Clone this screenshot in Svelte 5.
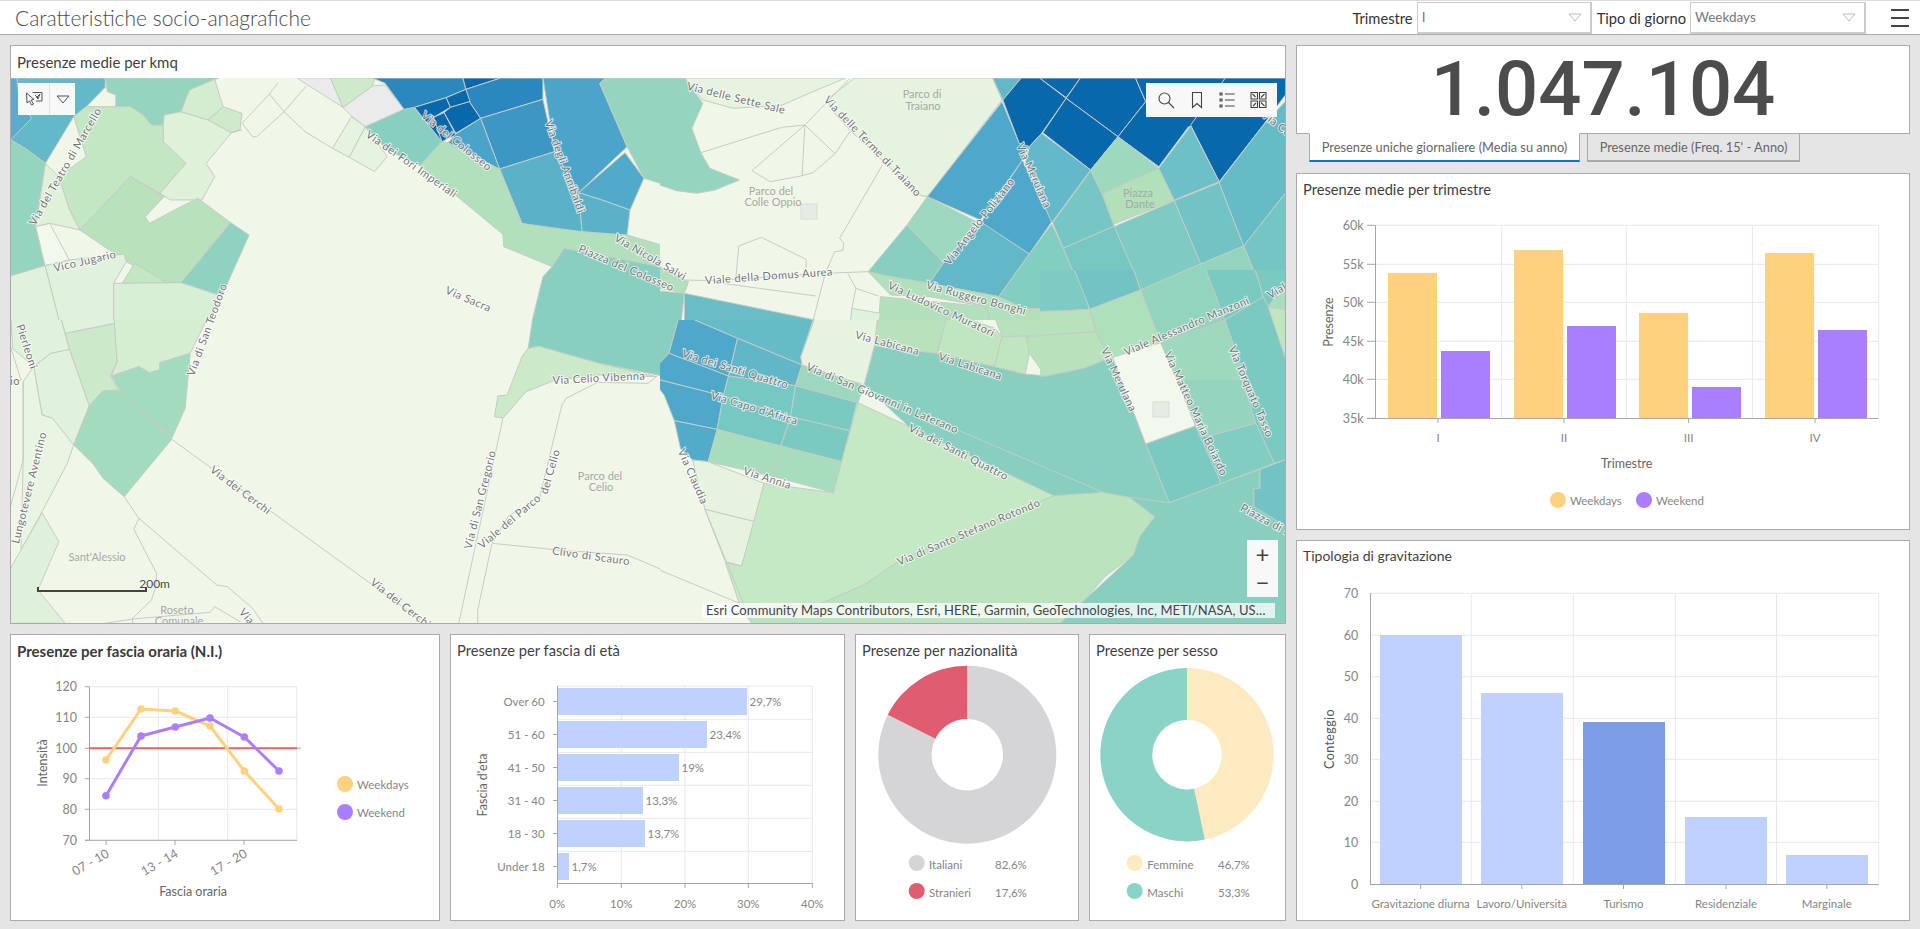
<script>
  // map cells, traced per area: [fill, points]. Each group has its own scale and is clipped to its quadrant.
  const nw = [
    ['#63b9c7', '25,234 250,234 250,262 205,320 175,350 108,490 60,445 25,420'],
    ['#56aecb', '25,234 40,234 45,290 75,355 25,420'],
    ['#95d5bf', '250,234 520,234 450,270 430,335 400,350 385,375 360,375 340,345 310,320 300,325 295,375 265,378 275,320 275,285 255,275'],
    ['#95d5bf', '25,420 60,445 108,490 85,680 107,797 25,828'],
    ['#c2e7c2', '275,320 310,320 340,345 360,375 388,378 388,425 442,490 380,580 310,530 190,690 165,630 140,530 205,470 175,350 205,320'],
    ['#dff1d9', '388,378 390,345 430,335 495,360 550,398 490,490 510,530 480,600 405,600 380,580 442,490 388,425'],
    ['#d4edd0', '430,335 450,270 510,238 530,320 495,360'],
    ['#cfeacb', '495,360 530,320 575,340 570,390 550,398'],
    ['#dff1d9', '108,490 140,530 165,630 190,690 118,670 85,680'],
    ['#b8e2bc', '310,530 390,590 345,650 355,670 430,620 470,595 548,668 430,848 395,848 300,785 190,690'],
    ['#c2e8c2', '320,790 395,848 290,850'],
    ['#8ed3c0', '548,668 592,705 527,888 430,848'],
    ['#f2f8ec', '85,680 118,670 165,780 107,797'],
    ['#e1f2dc', '107,797 165,780 295,762 300,785 270,850 270,985 145,985'],
    ['#e1f2dc', '25,828 107,797 145,985 25,985'],
    ['#d7efd4', '270,850 430,848 527,888 490,985 270,985'],
    ['#ebebeb', '705,234 785,234 815,322 835,348 868,380 960,328 915,255 885,258 815,322'],
    ['#cdebcb', '785,234 890,234 885,258 815,322'],
    ['#e6f4df', '835,350 868,380 830,472 790,445'],
    ['#e6f4df', '868,380 920,470 890,515 830,472'],
    ['#88cfc0', '868,380 960,328 983,322 1050,425 998,497 920,450'],
    ['#2b88be', '885,234 1100,234 1107,268 1060,293 985,322 960,328 915,250'],
    ['#0868ac', '1100,234 1190,234 1107,268'],
    ['#2b88be', '1107,268 1190,234 1290,234 1290,298 1142,355 1115,305'],
    ['#0868ac', '1060,293 1107,268 1117,305 1070,322'],
    ['#0868ac', '1070,322 1115,305 1142,355 1083,400 1055,338'],
    ['#0868ac', '985,322 1060,293 1070,322 1030,352 1050,425'],
    ['#0868ac', '1030,352 1055,338 1083,405 1050,425'],
    ['#3d97c5', '1142,355 1290,298 1318,455 1187,507'],
    ['#4aa3c9', '1065,428 1083,402 1142,355 1187,507 1160,505'],
    ['#4ba4ca', '1290,234 1440,234 1425,250 1490,440 1375,578 1318,455'],
    ['#5bb2c8', '1187,507 1318,455 1375,578 1383,695 1320,690 1265,675 1255,680 1240,670'],
    ['#50aac9', '1375,578 1485,458 1530,535 1497,630 1430,600'],
    ['#5bb2c8', '1375,578 1430,600 1497,630 1490,705 1455,705 1383,695'],
    ['#95d5bf', '1425,250 1440,234 1590,234 1590,558 1530,535 1490,440'],
    ['#b3e0bc', '998,497 1050,425 1065,428 1187,507 1240,670 1265,675 1383,695 1490,705 1590,742 1590,856 1500,790 1340,745 1312,800 1197,740 1195,703'],
    ['#88cfc0', '1340,745 1590,805 1590,985 1260,985 1290,830 1312,800']
  ];

  const ne = [
    ['#95d5bf', '-25,234 60,234 105,310 78,385 100,458 122,505 195,540 135,570 90,580 40,572 -25,545'],
    ['#e6f3df', '62,234 455,234 388,268 300,315 180,325 105,300'],
    ['#e6f3df', '477,234 815,234 838,300 655,590 635,585 465,390 428,340 408,300'],
    ['#62b8c7', '815,234 885,234 840,300'],
    ['#0868ac', '885,234 930,234 995,295 935,400 905,440 880,430 840,300'],
    ['#0868ac', '930,234 1030,234 995,293'],
    ['#0868ac', '1030,234 1165,234 1190,305 1122,410 995,295'],
    ['#0868ac', '995,295 1122,410 1055,510 938,398'],
    ['#0868ac', '1165,234 1385,234 1310,380 1295,380 1222,500 1122,410 1190,305'],
    ['#0868ac', '1385,234 1535,234 1535,280 1475,380 1370,545 1300,375'],
    ['#4ea8ca', '838,305 880,430 905,440 888,480 785,660 655,590'],
    ['#4ea8ca', '888,480 960,665 905,762 785,670'],
    ['#63b9c7', '935,400 1055,510 960,668 895,490 905,440'],
    ['#62b8c7', '785,665 905,762 830,890 660,850 695,788'],
    ['#9cd8be', '655,590 775,665 695,788 605,675'],
    ['#88cfc0', '605,675 695,788 660,850 555,828 510,815'],
    ['#9dd9bd', '1122,410 1222,505 1083,582 1055,510'],
    ['#b1e0b9', '1083,582 1222,505 1260,600 1113,672'],
    ['#6cc0c6', '1222,505 1300,378 1370,545 1260,600'],
    ['#76c7c3', '1055,512 1083,582 1113,678 988,745 962,668'],
    ['#82cec1', '960,672 988,745 1050,925 960,935 890,925 830,890 905,762'],
    ['#77c8c3', '988,745 1113,678 1180,868 1052,928'],
    ['#7dcbc2', '1113,680 1260,602 1325,792 1180,868'],
    ['#72c4c4', '1260,602 1370,548 1430,738 1325,792'],
    ['#65bcc6', '1370,548 1475,380 1535,300 1535,575 1430,738'],
    ['#74c6c3', '1430,738 1535,575 1535,860 1480,888'],
    ['#93d4bf', '1325,792 1430,738 1480,888 1370,930 1380,985 1212,985 1180,868'],
    ['#b7e2bb', '1050,928 1180,868 1212,985 1060,985'],
    ['#88cfc0', '1380,930 1480,888 1495,925 1520,985 1385,985'],
    ['#68bdc6', '60,880 380,960 380,985 60,985'],
    ['#88cfc0', '-25,870 60,880 50,985 -25,985'],
    ['#b3e0bc', '-25,785 70,845 60,878 -25,860'],
    ['#b3e0bc', '510,815 555,828 660,850 830,890 890,925 1050,928 1060,985 815,985 800,920 660,890 565,885'],
    ['#b3e0bc', '540,890 800,920 815,985 535,985'],
    ['#e1f2dc', '470,925 540,940 535,985 465,985']
  ];

  const sw = [
    ['#d5eed2', '270,-25 500,-25 452,100 380,128 380,150 355,158 330,140 265,168 278,125 272,60'],
    ['#cce9c9', '155,40 272,10 278,125 262,168 280,210 245,212 212,258 165,88'],
    ['#e1f2dc', '80,140 120,100 165,88 212,258 175,375 150,350 125,295 100,285'],
    ['#e1f2dc', '140,-25 270,-25 272,10 155,40'],
    ['#e1f2dc', '25,-25 140,-25 165,88 120,100 80,140 30,85'],
    ['#a3dbbe', '265,168 330,140 355,158 380,150 380,128 452,100 440,265 408,355 285,212'],
    ['#a3dbbe', '245,212 285,212 408,358 295,530 245,475 220,430 175,375 212,258'],
    ['#e9f5e3', '100,285 125,295 175,375 160,430 100,575 50,690 55,420 55,185 80,140'],
    ['#dff1da', '100,578 140,665 90,810 155,910 25,910 25,745'],
    ['#cce9c9', '1255,85 1280,78 1425,130 1560,170 1420,165 1320,180 1250,215 1195,295 1175,290 1183,228 1205,225 1240,110'],
    ['#88cfc0', '1268,-25 1590,-25 1590,172 1425,130 1280,78 1255,85']
  ];

  const se = [
    ['#88cfc0', '-25,-25 50,-25 22,100 -25,160'],
    ['#66bcc6', '40,-25 382,-25 345,110 348,135 190,55 85,0'],
    ['#4ea8ca', '22,100 50,-25 85,0 190,55 168,168'],
    ['#4ea8ca', '22,100 168,168 155,228 -25,172 -25,160'],
    ['#4ea8ca', '-25,172 155,228 140,328 35,302 10,225'],
    ['#51abc9', '35,302 140,328 118,425 80,420 50,385'],
    ['#61b7c7', '190,55 348,135 332,197 168,168'],
    ['#76c8c3', '168,168 332,197 320,290 155,228'],
    ['#76c8c3', '155,228 320,290 296,378 140,328'],
    ['#7acac2', '332,197 483,245 465,332 320,290'],
    ['#7acac2', '320,290 465,332 445,425 296,378'],
    ['#9cd8be', '348,135 500,195 485,248 332,197'],
    ['#a7dcbc', '140,330 296,378 280,470 118,425'],
    ['#a7dcbc', '296,378 445,425 425,518 280,470'],
    ['#e6f4df', '80,420 118,425 255,490 232,605 110,568'],
    ['#e6f4df', '110,568 232,605 200,738 160,725'],
    ['#c5e9c5', '485,248 610,320 965,527 590,720 500,795 395,850 200,870 160,728 200,738 255,490 425,518 445,425'],
    ['#bae4bd', '965,527 1085,517 1150,532 1212,590 1175,650 1160,705 1090,770 1040,840 980,910 225,910 200,870 395,850 500,795 590,720'],
    ['#88cfc0', '525,78 680,100 820,140 895,162 945,168 1000,162 1110,115 1190,372 1248,548 1375,490 1470,448 1470,505 1455,510 1535,620 1535,910 980,910 1040,840 1160,705 1175,650 1212,590 1150,532 1085,517 965,527 610,320 500,195'],
    ['#b7e2bb', '535,-25 705,-25 680,100 525,78'],
    ['#c0e6c0', '705,-25 820,25 838,50 820,140 680,100'],
    ['#c0e6c0', '838,50 898,50 905,100 895,162 820,140'],
    ['#b7e2bb', '898,50 1070,38 1088,110 1000,162 945,168 905,100'],
    ['#b7e2bb', '815,-25 1055,-25 1070,38 838,50'],
    ['#e6f4df', '385,-25 535,-25 525,78 500,195 348,135 345,110'],
    ['#f3f8ec', '1110,115 1228,62 1312,318 1190,372'],
    ['#95d5bf', '1055,-25 1205,-25 1228,62 1110,115 1088,110'],
    ['#95d5bf', '1235,65 1380,0 1460,310 1338,350 1312,318'],
    ['#7acac2', '1375,-25 1505,-25 1535,95 1535,418 1505,430 1460,310'],
    ['#b3e0bc', '1505,-25 1535,-25 1535,95'],
    ['#7acac2', '1190,372 1312,318 1375,490 1248,548'],
    ['#80cdc2', '1338,350 1460,310 1505,430 1375,490 1312,318'],
    ['#72c4c4', '1470,448 1535,418 1535,620 1455,560 1455,505 1470,505']
  ];

  // the blocks along Viale Manzoni, drawn over the seam between the two right quadrants
  const manzoni = [
    ['#7dcbc2', '-20,-20 105,-20 148,118 80,122 -20,125'],
    ['#72c4c4', '95,-20 275,-20 302,60 150,118'],
    ['#7dcbc2', '275,-20 490,-20 302,60'],
    ['#93d4bf', '302,60 450,-5 490,-20 560,150 360,220'],
    ['#aee0bc', '148,118 302,60 362,218 218,262 190,230 168,185'],
    ['#b7e2bb', '-20,125 80,122 148,118 168,185 -20,198'],
    ['#b7e2bb', '-20,198 168,185 190,230 218,262 130,295 20,318 -20,320'],
    ['#88cfc0', '-20,320 20,318 130,295 218,262 250,350 -20,350'],
    ['#f3f8ec', '218,262 362,218 420,350 250,350'],
    ['#9dd9bd', '362,218 560,150 625,350 420,350'],
    ['#7acac2', '490,-20 640,-20 670,80 555,150'],
    ['#7acac2', '555,150 670,80 685,110 740,270 760,350 625,350'],
    ['#7acac2', '640,-20 770,-20 770,40 735,40 685,110 670,80'],
    ['#a8debd', '685,110 735,40 770,40 770,125'],
    ['#c0e6c0', '685,112 770,125 770,330 738,270']
  ];

  const roads = {
    nw: ['640,282 675,335 725,395 790,445', '675,335 728,258', '640,282 575,370 600,410 610,410 675,335', '660,250 640,282', '85,680 75,670', '550,398 575,390'],
    ne: ['100,458 298,382 355,375', '225,512 355,375 465,235', '355,375 348,528', '355,375 428,460', '225,512 270,545 345,528 375,518 430,460 465,395',
      '545,495 440,715 450,730 448,752 428,755 405,820 370,985', '185,845 193,738 248,712 358,778 358,805', '65,840 130,842 400,820 510,815', '140,848 382,888',
      '460,820 480,865 535,888', '480,865 470,925'],
    sw: ['408,358 1000,900', '295,530 330,595 515,795 540,800 600,865 625,910', '330,595 318,628 372,760 370,800 360,840 315,895 315,910', '250,910 315,897 500,877 510,860 570,905',
      '1195,295 1090,910', '1420,187 1345,235 1335,255 1280,545 1210,585 1170,665 1135,870 1135,910', '1170,670 1325,690 1490,705 1590,758', '1420,187 1540,190 1560,170', '55,185 55,420 25,560', '25,80 50,180 25,185'],
    se: ['-25,738 195,850', '720,325 1085,517', '110,568 225,910', '1150,532 1248,548']
  };

  // x, y (centre), angle, text
  const streets = [
    [66, 167, -60, 'Via del Teatro di Marcello'], [456, 142, 39, 'Via del Colosseo'], [564, 167, 70, 'Via degli Annibaldi'],
    [411, 165, 35, 'Via dei Fori Imperiali'], [85, 262, -13, 'Vico Jugario'], [468, 300, 23, 'Via Sacra'],
    [650, 258, 30, 'Via Nicola Salvi'], [626, 269, 23, 'Piazza del Colosseo'], [208, 330, -70, 'Via di San Teodoro'],
    [26, 347, 72, 'Pierleoni'], [30, 488, -76, 'Lungotevere Aventino'], [240, 491, 37, 'Via dei Cerchi'], [400, 604, 38, 'Via dei Cerchi'],
    [481, 500, -76, 'Via di San Gregorio'], [510, 522, -40, 'Viale del Parco'], [551, 472, -74, 'del Celio'],
    [599, 379, -3, 'Via Celio Vibenna'], [591, 557, 8, 'Clivo di Scauro'], [246, 617, 50, 'Via'], [15, 382, 0, 'io'],
    [736, 99, 14, 'Via delle Sette Sale'], [872, 147, 46, 'Via delle Terme di Traiano'], [769, 277, -4, 'Viale della Domus Aurea'],
    [980, 222, -52, 'Via Angelo Poliziano'], [1033, 176, 66, 'Via Merulana'], [976, 299, 15, 'Via Ruggero Bonghi'],
    [941, 310, 25, 'Via Ludovico Muratori'], [1187, 327, -23, 'Viale Alessandro Manzoni'], [1296, 140, 38, 'Via Conte Verde'],
    [887, 344, 15, 'Via Labicana'], [970, 367, 18, 'Via Labicana'], [735, 370, 17, 'Via dei Santi Quattro'],
    [754, 409, 17, "Via Capo d'Africa"], [882, 399, 23, 'Via di San Giovanni in Laterano'], [958, 453, 27, 'Via dei Santi Quattro'],
    [767, 479, 18, 'Via Annia'], [692, 477, 66, 'Via Claudia'], [969, 533, -23, 'Via di Santo Stefano Rotondo'],
    [1118, 380, 65, 'Via Merulana'], [1195, 414, 65, 'Via Matteo Maria Boiardo'], [1250, 392, 67, 'Via Torquato Tasso'],
    [1275, 526, 28, 'Piazza di Porta'], [1280, 290, -30, 'Viale']
  ];

  const places = [
    [600, 477, 'Parco del'], [601, 488, 'Celio'], [97, 558, "Sant'Alessio"], [177, 611, 'Roseto'], [179, 622, 'Comunale'],
    [922, 95, 'Parco di'], [923, 107, 'Traiano'], [771, 192, 'Parco del'], [773, 203, 'Colle Oppio'], [1138, 194, 'Piazza'], [1140, 205, 'Dante']
  ];

  const hourly = {
    days: '106,760 141,709 175.3,711 210,726 244.3,771 279,809',
    end: '106,795.7 141,736 175.3,727 210,718 244.3,737 279,771'
  };

  const ages = [
    ['Over 60', 688, 747, '29,7%'], ['51 - 60', 721, 707, '23,4%'], ['41 - 50', 754, 679, '19%'],
    ['31 - 40', 787, 643, '13,3%'], ['18 - 30', 820, 645, '13,7%'], ['Under 18', 853, 569, '1,7%']
  ];

  const quarters = [
    ['I', 1438, 1388, 273, 1441, 351, 1501.7], ['II', 1564, 1514, 250, 1567, 326, 1626.3],
    ['III', 1688.6, 1639, 313, 1692, 387, 1752.4], ['IV', 1815, 1765, 253, 1818, 330, 1878.6]
  ];

  const gravity = [
    ['Gravitazione diurna', 1380, 635, 1420.6], ['Lavoro/Università', 1481, 693, 1521.8], ['Turismo', 1583, 722, 1623.5],
    ['Residenziale', 1685, 817, 1726], ['Marginale', 1786, 855, 1826.8]
  ];

  const arc = (cx, cy, r, r0, from, to) => {
    const p = (rad, a) => [cx + rad * Math.sin(a * Math.PI * 2), cy - rad * Math.cos(a * Math.PI * 2)].map((n) => n.toFixed(2)).join(' ');
    const big = to - from > 0.5 ? 1 : 0;
    return `M${p(r, from)}A${r} ${r} 0 ${big} 1 ${p(r, to)}L${p(r0, to)}A${r0} ${r0} 0 ${big} 0 ${p(r0, from)}Z`;
  };
</script>

{#snippet caret(color)}
  <svg class="tri" width="14" height="9" viewBox="0 0 14 9" fill="none" stroke={color}><path d="M1 1h12L7 8z" /></svg>
{/snippet}

<header class="topbar">
  <h1>Caratteristiche socio-anagrafiche</h1>
  <div class="filters">
    <span class="filter-label">Trimestre</span>
    <div class="select s1"><span>I</span>{@render caret('#bbb')}</div>
    <span class="filter-label">Tipo di giorno</span>
    <div class="select s2"><span>Weekdays</span>{@render caret('#bbb')}</div>
    <div class="burger"><b></b><b></b><b></b></div>
  </div>
</header>

<main class="page">
  <div class="col-left">
    <section class="panel map-panel">
      <div class="title medium">Presenze medie per kmq</div>
      <div class="map">
        <svg class="map-svg" viewBox="11 78 1274 545" width="1274" height="545">
          <defs>
            <clipPath id="q-nw"><rect x="0" y="0" width="660" height="320" /></clipPath>
            <clipPath id="q-ne"><rect x="660" y="0" width="640" height="320" /></clipPath>
            <clipPath id="q-sw"><rect x="0" y="320" width="660" height="310" /></clipPath>
            <clipPath id="q-se"><rect x="660" y="320" width="640" height="310" /></clipPath>
            <clipPath id="q-mz"><rect x="1040" y="270" width="250" height="110" /></clipPath>
          </defs>
          <rect x="0" y="70" width="1300" height="560" fill="#f0f7e9" />
          <g clip-path="url(#q-nw)"><g transform="scale(0.42087,0.33333)">
            {#each nw as [fill, points]}<polygon {fill} {points} />{/each}
            {#each roads.nw as points}<polyline {points} />{/each}
          </g></g>
          <g clip-path="url(#q-ne)"><g transform="translate(660,0) scale(0.40816,0.33333)">
            {#each ne as [fill, points]}<polygon {fill} {points} />{/each}
            {#each roads.ne as points}<polyline {points} />{/each}
          </g></g>
          <g clip-path="url(#q-sw)"><g transform="translate(0,320) scale(0.42087,0.33333)">
            {#each sw as [fill, points]}<polygon {fill} {points} />{/each}
            {#each roads.sw as points}<polyline {points} />{/each}
          </g></g>
          <g clip-path="url(#q-se)"><g transform="translate(660,320) scale(0.40816,0.33333)">
            {#each se as [fill, points]}<polygon {fill} {points} />{/each}
            {#each roads.se as points}<polyline {points} />{/each}
          </g></g>
          <g clip-path="url(#q-mz)"><g transform="translate(1040,270) scale(0.33333)">
            {#each manzoni as [fill, points]}<polygon {fill} {points} />{/each}
          </g></g>
          <rect class="lot" x="801" y="204" width="16" height="15" />
          <rect class="lot" x="1153" y="402" width="16" height="15" />
          {#each places as [x, y, label]}
            <text class="place" {x} {y}>{label}</text>
          {/each}
          {#each streets as [x, y, angle, label]}
            <text class="street" {x} {y} transform="rotate({angle} {x} {y})">{label}</text>
          {/each}
        </svg>

        <div class="tool tool-select">
          <svg width="18" height="18" viewBox="0 0 18 18" fill="none" stroke="#555">
            <path d="M6.500 2.500h9.500v8.500h-6M9 5l3 3M14 4l-2 5-1.500-1.500z" />
            <path d="M.5 3L8 9.500 5 10l2.500 4-2 1-2-4L1 13z" fill="#f8f8f8" />
          </svg>
          <span class="tool-sep"></span>
          {@render caret('#555')}
        </div>
        <div class="tool tool-bar">
          <svg width="18" height="18" viewBox="0 0 18 18" fill="none" stroke="#444" stroke-width="1.100"><circle cx="7.500" cy="7.500" r="5.500" /><path d="M11.500 11.500l5.500 5.500" /></svg>
          <svg width="14" height="18" viewBox="0 0 14 18" fill="none" stroke="#444" stroke-width="1.100"><path d="M2.500 1.500h9v15l-4.500-4-4.500 4z" /></svg>
          <svg width="16" height="18" viewBox="0 0 16 18" fill="none" stroke="#444" stroke-width="1.100"><path d="M1 2h2v2H1zM1 8h2v2H1zM1 14h2v2H1zM6 3h9.500M6 9h9.500M6 15h9.500" /></svg>
          <svg width="17" height="18" viewBox="0 0 17 18" fill="none" stroke="#444" stroke-width="1.100"><path d="M1 1.500h6.500v6.500H1zM9.500 1.500H16v6.500H9.500zM1 10h6.500v6.500H1zM9.500 10H16v6.500H9.500zM11 6.500l3.500-3.500M2.500 3l3 3M3 15l3-3M11 11.500l3.500 3.500" /></svg>
        </div>
        <div class="zoom"><span>+</span><span>−</span></div>
        <div class="scale"><span>200m</span><i></i></div>
        <div class="attribution">Esri Community Maps Contributors, Esri, HERE, Garmin, GeoTechnologies, Inc, METI/NASA, USGS</div>
      </div>
    </section>

    <div class="row">
      <section class="panel p-hours">
        <div class="title bold">Presenze per fascia oraria (N.I.)</div>
        <svg class="chart" viewBox="11 661 428 259" width="428" height="259">
          {#each [686.7, 717.3, 748.3, 778.7, 809.3] as y}<line class="grid" x1="89" x2="297" y1={y} y2={y} />{/each}
          {#each [158.3, 227.7, 296.700] as x}<line class="grid" x1={x} x2={x} y1="686.700" y2="840.300" />{/each}
          <line class="axis" x1="89.500" x2="89.500" y1="686.700" y2="840.300" />
          <line class="axis" x1="85" x2="297" y1="840.300" y2="840.300" />
          {#each [[120, 686.7], [110, 717.3], [100, 748.3], [90, 778.7], [80, 809.3], [70, 840.3]] as [v, y]}
            <line class="axis" x1="85" x2="89" y1={y} y2={y} />
            <text class="tick end big" x="77" y={y + 4.500}>{v}</text>
          {/each}
          {#each [[106, '07 - 10'], [175, '13 - 14'], [244, '17 - 20']] as [x, label]}
            <line class="axis" x1={x} x2={x} y1="840" y2="845" />
            <text class="tick end big" x={x + 4} y="856" transform="rotate(-30 {x + 4} 856)">{label}</text>
          {/each}
          <line x1="297" x2="301" y1="748.300" y2="748.300" stroke="#ccc" stroke-width="2" />
          <line x1="89" x2="297" y1="748.300" y2="748.300" stroke="#e0655f" stroke-width="2" />
          {#each [[hourly.days, '#fed17f'], [hourly.end, '#a97fff']] as [points, color]}
            <polyline class="series" {points} stroke={color} />
            {#each points.split(' ') as pt}
              <circle cx={pt.split(',')[0]} cy={pt.split(',')[1]} r="3.800" fill={color} />
            {/each}
          {/each}
          <text class="axis-title" x="47" y="763" transform="rotate(-90 47 763)">Intensità</text>
          <text class="axis-title" x="193" y="896">Fascia oraria</text>
          <circle cx="345" cy="784" r="8" fill="#fed17f" />
          <circle cx="345" cy="812" r="8" fill="#a97fff" />
          <text class="tick" x="357" y="789">Weekdays</text>
          <text class="tick" x="357" y="817">Weekend</text>
        </svg>
      </section>

      <section class="panel p-ages">
        <div class="title">Presenze per fascia di età</div>
        <svg class="chart" viewBox="451 661 393 259" width="393" height="259">
          {#each [686, 719.3, 752.3, 785.3, 818.3, 851.3] as y}<line class="grid" x1="557" x2="812.300" y1={y} y2={y} />{/each}
          {#each [621.3, 685, 748.3, 812.3] as x}<line class="grid" x1={x} x2={x} y1="686" y2="883" />{/each}
          {#each ages as [label, y, end, value]}
            <rect x="557.500" {y} width={end - 557.500} height="27" fill="#bfd2ff" />
            <line class="axis" x1="553" x2="557" y1={y + 13.500} y2={y + 13.500} />
            <text class="tick end" x="544.700" y={y + 18}>{label}</text>
            <text class="tick" x={end + 2.500} y={y + 18}>{value}</text>
          {/each}
          <line class="axis" x1="557.500" x2="557.500" y1="686" y2="883.500" />
          <line class="axis" x1="557" x2="812.300" y1="883.500" y2="883.500" />
          {#each [[557.3, '0%'], [621.3, '10%'], [685, '20%'], [748.3, '30%'], [812.3, '40%']] as [x, label]}
            <line class="axis" x1={x} x2={x} y1="883" y2="888" />
            <text class="tick mid" {x} y="908">{label}</text>
          {/each}
          <text class="axis-title" x="487" y="785" transform="rotate(-90 487 785)">Fascia d'eta</text>
        </svg>
      </section>

      <section class="panel p-nat">
        <div class="title">Presenze per nazionalità</div>
        <svg class="chart" viewBox="856 661 222 259" width="222" height="259">
          <path d={arc(967.3, 754.7, 89, 35.7, 0, 0.824)} fill="#d5d5d8" />
          <path d={arc(967.3, 754.7, 89, 35.7, 0.824, 1)} fill="#e05c6f" />
          <circle cx="916.700" cy="863" r="8" fill="#d5d5d8" />
          <circle cx="916.700" cy="891" r="8" fill="#e05c6f" />
          <text class="tick" x="929" y="869">Italiani</text>
          <text class="tick" x="995" y="869">82,6%</text>
          <text class="tick" x="929" y="897">Stranieri</text>
          <text class="tick" x="995" y="897">17,6%</text>
        </svg>
      </section>

      <section class="panel p-sex">
        <div class="title">Presenze per sesso</div>
        <svg class="chart" viewBox="1090 661 195 259" width="195" height="259">
          <path d={arc(1187, 754.7, 86.7, 34.7, 0, 0.467)} fill="#feeac0" />
          <path d={arc(1187, 754.7, 86.7, 34.7, 0.467, 1)} fill="#8bd3c7" />
          <circle cx="1134.700" cy="863" r="8" fill="#feeac0" />
          <circle cx="1134.700" cy="891" r="8" fill="#8bd3c7" />
          <text class="tick" x="1147.300" y="869">Femmine</text>
          <text class="tick" x="1218" y="869">46,7%</text>
          <text class="tick" x="1147.300" y="897">Maschi</text>
          <text class="tick" x="1218" y="897">53,3%</text>
        </svg>
      </section>
    </div>
  </div>

  <div class="col-right">
    <section class="panel kpi">1.047.104</section>
    <div class="tabs">
      <div class="tab active">Presenze uniche giornaliere (Media su anno)</div>
      <div class="tab second">Presenze medie (Freq. 15' - Anno)</div>
    </div>

    <section class="panel p-quarter">
      <div class="title">Presenze medie per trimestre</div>
      <svg class="chart" viewBox="1297 200 612 329" width="612" height="329">
        {#each [225.3, 264.3, 302.3, 341.3, 379.3] as y}<line class="grid" x1="1375" x2="1878.600" y1={y} y2={y} />{/each}
        {#each quarters as q}<line class="grid" x1={q[6]} x2={q[6]} y1="225" y2="418" />{/each}
        {#each quarters as [label, cx, x1, top1, x2, top2]}
          <rect x={x1} y={top1} width="49" height={418 - top1} fill="#fed17f" />
          <rect x={x2} y={top2} width="49" height={418 - top2} fill="#a97fff" />
          <line class="axis" x1={cx} x2={cx} y1="418" y2="423" />
          <text class="tick mid" x={cx} y="442">{label}</text>
        {/each}
        <line class="axis" x1="1375.500" x2="1375.500" y1="225" y2="418.500" />
        <line class="axis" x1="1367" x2="1878.600" y1="418.500" y2="418.500" />
        {#each [['60k', 225.3], ['55k', 264.3], ['50k', 302.3], ['45k', 341.3], ['40k', 379.3], ['35k', 418.3]] as [v, y]}
          <line class="axis" x1="1367" x2="1375" y1={y} y2={y} />
          <text class="tick end big" x="1363.500" y={y + 4.500}>{v}</text>
        {/each}
        <text class="axis-title" x="1333" y="322" transform="rotate(-90 1333 322)">Presenze</text>
        <text class="axis-title" x="1626.700" y="468">Trimestre</text>
        <circle cx="1558" cy="500" r="8" fill="#fed17f" />
        <circle cx="1644" cy="500" r="8" fill="#a97fff" />
        <text class="tick" x="1570" y="505">Weekdays</text>
        <text class="tick" x="1656" y="505">Weekend</text>
      </svg>
    </section>

    <section class="panel p-gravity">
      <div class="title narrow">Tipologia di gravitazione</div>
      <svg class="chart" viewBox="1297 567 612 353" width="612" height="353">
        {#each [593.3, 635.3, 676.7, 718.3, 759.3, 801.3, 842.3] as y}<line class="grid" x1="1370" x2="1878.600" y1={y} y2={y} />{/each}
        {#each [1471.2, 1573.3, 1675.3, 1776.5, 1878.6] as x}<line class="grid" x1={x} x2={x} y1="593" y2="884" />{/each}
        {#each gravity as [label, x, top, cx], i}
          <rect {x} y={top} width="82" height={884 - top} fill={i === 2 ? '#7c9ce6' : '#bfd2ff'} />
          <line class="axis" x1={cx} x2={cx} y1="884" y2="889" />
          <text class="tick mid" x={cx} y="908">{label}</text>
        {/each}
        <line class="axis" x1="1370.500" x2="1370.500" y1="593" y2="884.500" />
        <line class="axis" x1="1370" x2="1878.600" y1="884.500" y2="884.500" />
        {#each [[70, 593.3], [60, 635.3], [50, 676.7], [40, 718.3], [30, 759.3], [20, 801.3], [10, 842.3], [0, 884.3]] as [v, y]}
          <text class="tick end big" x="1358.300" y={y + 4.500}>{v}</text>
        {/each}
        <text class="axis-title spaced" x="1334" y="739" transform="rotate(-90 1334 739)">Conteggio</text>
      </svg>
    </section>
  </div>
</main>

<style>
  :global(body) { background: #e5e5e5; font-family: Lato, "Open Sans", sans-serif; color: #4c4c4c; }

  .topbar { height: 33px; background: #fff; border-top: 1px solid #ddd; border-bottom: 1px solid #aaa; display: flex; align-items: center; justify-content: space-between; }
  h1 { margin: 0 0 0 15px; font-size: 21px; font-weight: 300; color: #4c4c4c; }
  .filters { display: flex; align-items: center; height: 100%; font-size: 14.700px; }
  .filter-label { margin-right: 4px; color: #333; }
  .select { box-sizing: border-box; height: 32px; border: 1px solid #ccc; border-width: 1px 2px 2px 1px; display: flex; align-items: center; justify-content: space-between; padding: 0 8px 0 4px; color: #777; font-size: 13.500px; }
  .s1 { width: 175px; margin-right: 5px; }
  .s2 { width: 176px; }
  .burger { width: 18px; margin: 0 11px 0 25px; display: flex; flex-direction: column; gap: 6px; }
  .burger b { height: 2px; background: #444; }

  .page { display: flex; gap: 10px; padding: 10px 10px 0; }
  .col-left { width: 1276px; display: flex; flex-direction: column; gap: 10px; }
  .col-right { flex: 1; display: flex; flex-direction: column; min-width: 0; }

  .panel { box-sizing: border-box; background: #fff; border: 1px solid #aaa; min-width: 0; }
  .title { box-sizing: border-box; height: 26px; padding: 6px 6px 0; font-size: 14.700px; line-height: 18px; color: #3f3f3f; }
  .title.bold { font-size: 15px; font-weight: 700; color: #3a3a3a; padding-top: 7px; }
  .title.medium { height: 32px; padding-top: 7px; font-size: 15px; }
  .title.narrow { font-size: 14px; }
  .chart { display: block; }

  .map-panel { height: 579px; }
  .map { position: relative; height: 545px; overflow: hidden; }
  .map-svg { display: block; }
  .map-svg polygon, .map-svg polyline { stroke: #c6cbc6; stroke-width: 1; vector-effect: non-scaling-stroke; }
  .map-svg polyline { fill: none; }
  .lot { fill: #e6ebe4; stroke: #d8dcd6; }
  .street { font-size: 11px; letter-spacing: .45px; fill: #757575; stroke: #fff; stroke-opacity: .75; stroke-width: 2px; paint-order: stroke; text-anchor: middle; dominant-baseline: middle; }
  .place { font-size: 11px; fill: #a8a8a8; text-anchor: middle; dominant-baseline: middle; }

  .tool { position: absolute; background: #f8f8f8; display: flex; align-items: center; }
  .tool-select { left: 7px; top: 5px; width: 57px; height: 32px; }
  .tool-select svg:first-child { margin-left: 8px; }
  .tool-sep { width: 1px; height: 32px; background: #e3e3e3; margin: 0 6px 0 5px; }
  .tool-bar { left: 1135px; top: 5px; width: 131px; height: 34px; justify-content: space-around; padding: 0 3px; box-sizing: border-box; }
  .zoom { position: absolute; left: 1236px; top: 462px; width: 31px; height: 57px; background: #f8f8f8; display: flex; flex-direction: column; font-size: 24px; line-height: 28px; text-align: center; color: #444; }
  .scale { position: absolute; left: 26px; top: 498px; width: 110px; height: 16px; }
  .scale span { position: absolute; right: -23px; top: 0; font-size: 12px; }
  .scale i { position: absolute; left: 0; right: 0; bottom: 0; height: 5px; border: 2px solid #444; border-top: 0; box-sizing: border-box; }
  .attribution { position: absolute; left: 691px; top: 525px; width: 573px; box-sizing: border-box; padding: 0 4px; height: 15px; line-height: 15px; font-size: 13px; letter-spacing: .1px; background: rgba(255, 255, 255, .75); white-space: nowrap; overflow: hidden; text-overflow: ellipsis; color: #444; }

  .row { display: flex; gap: 10px; height: 287px; }
  .p-hours { width: 430px; }
  .p-ages { width: 395px; }
  .p-nat { width: 224px; }
  .p-sex { width: 197px; }

  .kpi { height: 89px; font-family: Roboto, sans-serif; font-size: 76px; font-weight: 500; line-height: 87px; text-align: center; color: #4c4c4c; }
  .tabs { display: flex; gap: 7px; margin: -1px 0 11px 13px; height: 29px; font-size: 12.800px; position: relative; }
  .tab { box-sizing: border-box; height: 29px; line-height: 26px; border: 1px solid #aaa; border-bottom-width: 2px; background: #e5e5e5; color: #666; white-space: nowrap; text-align: center; }
  .tab.active { background: #fff; border-top-color: #fff; border-bottom-color: #0079c1; width: 271px; }
  .tab.second { width: 213px; }
  .p-quarter { height: 357px; margin-bottom: 10px; }
  .p-gravity { height: 381px; }

  .grid { stroke: #e8e8e8; stroke-width: 1; }
  .axis { stroke: #a5a5a5; stroke-width: 1; }
  .series { fill: none; stroke-width: 3; stroke-linejoin: round; }
  .tick { font-size: 11.500px; fill: #858585; }
  .tick.big { font-size: 12.500px; }
  .tick.end { text-anchor: end; }
  .tick.mid { text-anchor: middle; }
  .axis-title { font-size: 12.500px; fill: #666; text-anchor: middle; }
  .axis-title.spaced { letter-spacing: .4px; fill: #555; }
</style>
